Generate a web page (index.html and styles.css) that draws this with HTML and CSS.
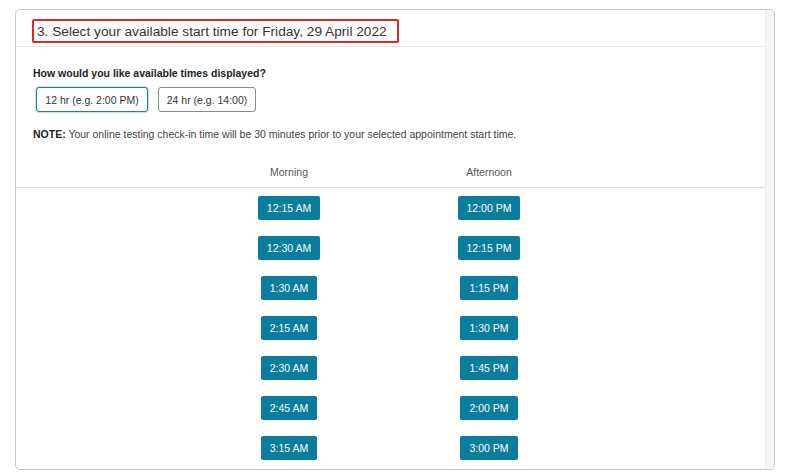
FILE: index.html
```html
<!DOCTYPE html>
<html lang="en">
<head>
    <meta charset="UTF-8">
    <meta name="viewport" content="width=device-width, initial-scale=1.0">
    <title>Select start time</title>
    <link rel="stylesheet" href="styles.css">
</head>
<body>
    <div class="frame">
        <div class="panel">
            <div class="panel-header">
                <h2 class="step-title">3. Select your available start time for Friday, 29 April 2022</h2>
            </div>

            <div class="panel-body">
                <p class="question">How would you like available times displayed?</p>
                <div class="format-options">
                    <button class="format-btn active">12 hr (e.g. 2:00 PM)</button>
                    <button class="format-btn">24 hr (e.g. 14:00)</button>
                </div>
                <p class="note"><strong>NOTE:</strong> Your online testing check-in time will be 30 minutes prior to your selected appointment start time.</p>
            </div>

            <div class="times">
                <div class="times-head">
                    <div class="col-title">Morning</div>
                    <div class="col-title">Afternoon</div>
                </div>
                <div class="times-grid" id="timesGrid"></div>
            </div>
        </div>
        <div class="scroll-track"></div>
    </div>

    <script>
        const morning = ['12:15 AM', '12:30 AM', '1:30 AM', '2:15 AM', '2:30 AM', '2:45 AM', '3:15 AM'];
        const afternoon = ['12:00 PM', '12:15 PM', '1:15 PM', '1:30 PM', '1:45 PM', '2:00 PM', '3:00 PM'];
        const grid = document.getElementById('timesGrid');

        // uma linha por horário, manhã e tarde lado a lado
        morning.forEach((time, i) => {
            [time, afternoon[i]].forEach((t) => {
                const cell = document.createElement('div');
                cell.className = 'time-cell';
                const btn = document.createElement('button');
                btn.className = 'time-btn';
                btn.textContent = t;
                cell.appendChild(btn);
                grid.appendChild(cell);
            });
        });
    </script>
</body>
</html>
```

FILE: styles.css
```css
body {
    margin: 0;
    background-color: white;
    font-family: "Liberation Sans", Arial, sans-serif;
}
.frame {
    display: flex;
    width: 758px;
    height: 459px;
    margin: 9px 0 0 15px;
    border: 1px solid #c9c9c9;
    border-radius: 5px;
    overflow: hidden;
    box-shadow: 0 0 1px rgba(0,0,0,0.08);
}
.panel {
    width: 750px;
    overflow: hidden;
}
.scroll-track {
    width: 8px;
    background-color: #f6f6f6;
    border-left: 1px solid #efefef;
}
.panel-header {
    height: 37px;
    border-bottom: 1px solid #e8e8e8;
    padding: 9px 0 0 16px;
    box-sizing: border-box;
}
.step-title {
    display: inline-block;
    margin: 0;
    width: 367px;
    height: 24px;
    box-sizing: border-box;
    border: 2px solid #e3262b;
    border-radius: 2px;
    padding: 2px 0 0 3px;
    font-size: 13.7px;
    font-weight: normal;
    color: #333;
    line-height: 17px;
    white-space: nowrap;
}
.panel-body {
    padding: 19px 0 0 17px;
}
.question {
    margin: 0;
    font-size: 10.5px;
    font-weight: bold;
    color: #222;
    line-height: 14px;
}
.format-options {
    display: flex;
    gap: 10px;
    margin: 7px 0 0 3px;
}
.format-btn {
    width: 98px;
    height: 25px;
    padding: 0;
    background-color: white;
    border: 1px solid #8a8a8a;
    border-radius: 3px;
    font-family: inherit;
    font-size: 10.5px;
    color: #333;
}
.format-btn.active {
    width: 112px;
    border-color: #1f7f9e;
    box-shadow: 0 0 0 1px rgba(31,127,158,0.25);
}
.note {
    margin: 15px 0 0;
    font-size: 10.5px;
    color: #444;
    line-height: 14px;
}
.note strong {
    color: #222;
}
.times {
    margin-top: 24px;
}
.times-head {
    display: grid;
    grid-template-columns: 200px 200px;
    padding-left: 173px;
    height: 22px;
    border-bottom: 1px solid #dedede;
}
.col-title {
    text-align: center;
    font-size: 10.5px;
    color: #555;
    line-height: 14px;
}
.times-grid {
    display: grid;
    grid-template-columns: 200px 200px;
    row-gap: 16px;
    padding: 8px 0 0 173px;
}
.time-cell {
    text-align: center;
}
.time-btn {
    height: 24px;
    padding: 0 9px;
    background-color: #0a7c9c;
    color: white;
    border: none;
    border-radius: 2px;
    font-family: inherit;
    font-size: 10.5px;
}
```
